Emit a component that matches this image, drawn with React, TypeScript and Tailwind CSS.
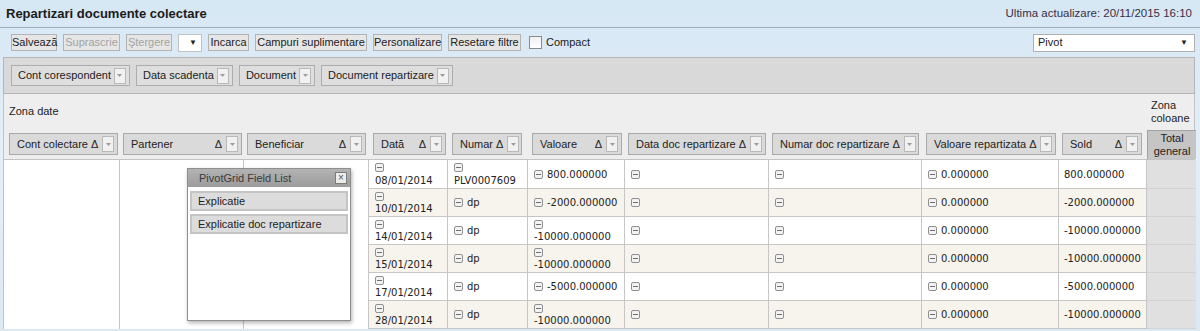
import React from "react";

const UI = "font-['Liberation_Sans',Arial,sans-serif]";
const DATA = "font-['DejaVu_Sans',Verdana,sans-serif]";

const cols = "grid-cols-[116px_124px_125px_79px_80px_97px_144px_153px_137px_88px_49px]";

interface Row {
    date: string;
    num: string;
    numWrap?: boolean;
    val: string;
    valWrap?: boolean;
    sold: string;
}

const rows: Row[] = [
    {date: "08/01/2014", num: "PLV0007609", numWrap: true, val: "800.000000", sold: "800.000000"},
    {date: "10/01/2014", num: "dp", val: "-2000.000000", sold: "-2000.000000"},
    {date: "14/01/2014", num: "dp", val: "-10000.000000", valWrap: true, sold: "-10000.000000"},
    {date: "15/01/2014", num: "dp", val: "-10000.000000", valWrap: true, sold: "-10000.000000"},
    {date: "17/01/2014", num: "dp", val: "-5000.000000", sold: "-5000.000000"},
    {date: "28/01/2014", num: "dp", val: "-10000.000000", valWrap: true, sold: "-10000.000000"},
];

const headers: { label: string; ml: number; w: number }[] = [
    {label: "Cont colectare", ml: 5, w: 109},
    {label: "Partener", ml: 3, w: 119},
    {label: "Beneficiar", ml: 3, w: 119},
    {label: "Dată", ml: 4, w: 73},
    {label: "Numar", ml: 4, w: 70},
    {label: "Valoare", ml: 4, w: 90},
    {label: "Data doc repartizare", ml: 3, w: 138},
    {label: "Numar doc repartizare", ml: 3, w: 147},
    {label: "Valoare repartizata", ml: 4, w: 130},
    {label: "Sold", ml: 3, w: 80},
];

const MinusBox = () => (
    <svg width="9" height="9" viewBox="0 0 9 9" className="block shrink-0">
        <rect x="0.5" y="0.5" width="8" height="8" rx="1.5" fill="#f3f3f3" stroke="#8f8f8f"/>
        <line x1="2" y1="4.5" x2="7" y2="4.5" stroke="#707070"/>
    </svg>
);

const DropBtn = () => (
    <span className="flex h-[16px] w-[12px] shrink-0 items-center justify-center border border-[#b9b9b9] bg-[#f1f1f1]">
        <svg width="5" height="3" viewBox="0 0 5 3">
            <path d="M0 0h5L2.5 3z" fill="#9c9c9c"/>
        </svg>
    </span>
);

const ToolBtn = ({label, w, disabled}: { label: string; w: string; disabled?: boolean }) => (
    <button
        className={`h-[17px] ${w} whitespace-nowrap border border-[#b3b3b3] bg-[#e6e6e6] text-center text-[11px] leading-[15px] ${disabled ? "text-[#a3a3a3]" : "text-[#222]"}`}
    >
        {label}
    </button>
);

const IconCell = ({text, wrap}: { text?: string; wrap?: boolean }) => {
    if (wrap) {
        return (
            <div className="flex flex-col justify-center pl-[6px] leading-[13px]">
                <span className="flex h-[12px] items-center"><MinusBox/></span>
                <span>{text}</span>
            </div>
        );
    }
    return (
        <div className="flex items-center gap-[4px] pl-[6px]">
            <MinusBox/>
            {text && <span>{text}</span>}
        </div>
    );
};

export default function App() {
    return (
        <div
            className={`${UI} h-[331px] w-[1200px] overflow-hidden bg-[linear-gradient(180deg,#d6e7f4_0%,#e3eff8_45%,#dbe9f5_100%)] text-[#222]`}
        >
            {/* title */}
            <div className="flex h-[28px] items-center justify-between border-b border-[#a3adb6] pl-[6px] pr-[8px]">
                <span className="text-[13px] font-bold text-[#1b1b1b]">Repartizari documente colectare</span>
                <span className="text-[11.5px] text-[#3a2f45]">Ultima actualizare: 20/11/2015 16:10</span>
            </div>

            {/* toolbar */}
            <div className="flex h-[29px] items-center pl-[11px] pr-[5px]">
                <div className="flex items-center gap-[6px]">
                    <ToolBtn label="Salvează" w="w-[46px]"/>
                    <ToolBtn label="Suprascrie" w="w-[57px]" disabled/>
                    <ToolBtn label="Ştergere" w="w-[46px]" disabled/>
                    <div className="flex h-[18px] w-[24px] items-center border border-[#c3c3c3] bg-white pl-[10px] text-[8px]">▼</div>
                    <ToolBtn label="Incarca" w="w-[41px]"/>
                    <ToolBtn label="Campuri suplimentare" w="w-[112px]"/>
                    <ToolBtn label="Personalizare" w="w-[69px]"/>
                    <ToolBtn label="Resetare filtre" w="w-[73px]"/>
                    <label className="ml-[2px] flex items-center gap-[4px] text-[11px]">
                        <span className="h-[13px] w-[13px] border border-[#8a8a8a] bg-[linear-gradient(180deg,#f0f0f0,#ffffff)]"/>
                        Compact
                    </label>
                </div>
                <div className="ml-auto flex h-[18px] w-[162px] items-center justify-between border border-[#b0b0b0] bg-white pl-[4px] pr-[6px] text-[11px]">
                    <span>Pivot</span>
                    <span className="text-[8px]">▼</span>
                </div>
            </div>

            {/* panel */}
            <div className="relative ml-[3px] w-[1192px]">
                {/* filter area */}
                <div className="flex h-[37px] items-center gap-[6px] border border-[#b5b5b5] bg-[#d9d9d9] pl-[7px]">
                    {["Cont corespondent", "Data scadenta", "Document", "Document repartizare"].map((f) => (
                        <div key={f} className="flex h-[21px] items-center gap-[3px] border border-[#adadad] bg-[#dedede] pl-[6px] pr-[3px] text-[11px]">
                            <span>{f}</span>
                            <DropBtn/>
                        </div>
                    ))}
                </div>

                {/* zone area */}
                <div className={`grid ${cols} grid-rows-[35px_30px] border-x border-[#c3c3c3] bg-[#eeeeee] text-[11px]`}>
                    <div className="col-span-10 flex items-center pl-[5px]">Zona date</div>
                    <div className="flex items-center pl-[4px] leading-[13px]">Zona<br/>coloane</div>
                    {headers.map((h) => (
                        <div key={h.label} className="flex items-center">
                            <div
                                className="flex h-[22px] items-center border border-[#a9a9a9] bg-[#dadada] pl-[7px] pr-[3px]"
                                style={{marginLeft: h.ml, width: h.w}}
                            >
                                <span className="flex-1 whitespace-nowrap">{h.label}</span>
                                <span className="ml-[3px] text-[11px]">Δ</span>
                                <span className="ml-[4px]"><DropBtn/></span>
                            </div>
                        </div>
                    ))}
                    <div className="mt-[1px] flex flex-col items-center justify-center border-l border-t border-[#a2a2a2] bg-[#c5c5c5] leading-[13px]">
                        <span>Total</span>
                        <span>general</span>
                    </div>
                </div>

                {/* body */}
                <div className={`${DATA} grid ${cols} grid-rows-[29px_repeat(5,28px)] border-l border-t border-[#c3c3c3] text-[10px] text-[#222]`}>
                    <div className="row-span-6 border-r border-[#c6c6c6] bg-white"/>
                    <div className="row-span-6 border-r border-[#c6c6c6] bg-white"/>
                    <div className="row-span-6 border-r border-[#c6c6c6] bg-white"/>
                    {rows.map((r, i) => {
                        const bg = i % 2 === 0 ? "bg-white" : "bg-[#f6f4ed]";
                        const cell = `flex items-center border-b border-r border-[#c6c6c6] ${bg}`;
                        return (
                            <React.Fragment key={i}>
                                <div className={cell}><IconCell text={r.date} wrap/></div>
                                <div className={cell}><IconCell text={r.num} wrap={r.numWrap}/></div>
                                <div className={cell}><IconCell text={r.val} wrap={r.valWrap}/></div>
                                <div className={cell}><IconCell/></div>
                                <div className={cell}><IconCell/></div>
                                <div className={cell}><IconCell text="0.000000"/></div>
                                <div className={`${cell} pl-[5px]`}>{r.sold}</div>
                                <div className="border-b border-[#d3d3d3] bg-[#e0e0e0]"/>
                            </React.Fragment>
                        );
                    })}
                </div>

                {/* field list popup */}
                <div className="absolute left-[184px] top-[111px] flex h-[153px] w-[164px] flex-col border border-[#8f8f8f] bg-white shadow-[1px_2px_4px_rgba(0,0,0,0.3)]">
                    <div className="flex h-[18px] items-center justify-between bg-[linear-gradient(180deg,#b3b3b3,#9c9c9c)] pl-[11px] pr-[3px] text-[11px] text-[#3b3b3b]">
                        <span>PivotGrid Field List</span>
                        <span className="flex h-[12px] w-[12px] items-center justify-center border border-[#7c7c7c] bg-[#ececec] text-[10px] leading-none text-[#555]">×</span>
                    </div>
                    <div className="flex flex-col gap-[3px] px-[2px] pt-[4px] text-[11px]">
                        {["Explicatie", "Explicatie doc repartizare"].map((f) => (
                            <div key={f} className="flex h-[20px] items-center border-2 border-[#c4c4c4] bg-[#dcdcdc] pl-[6px]">
                                {f}
                            </div>
                        ))}
                    </div>
                </div>
            </div>
        </div>
    );
}
